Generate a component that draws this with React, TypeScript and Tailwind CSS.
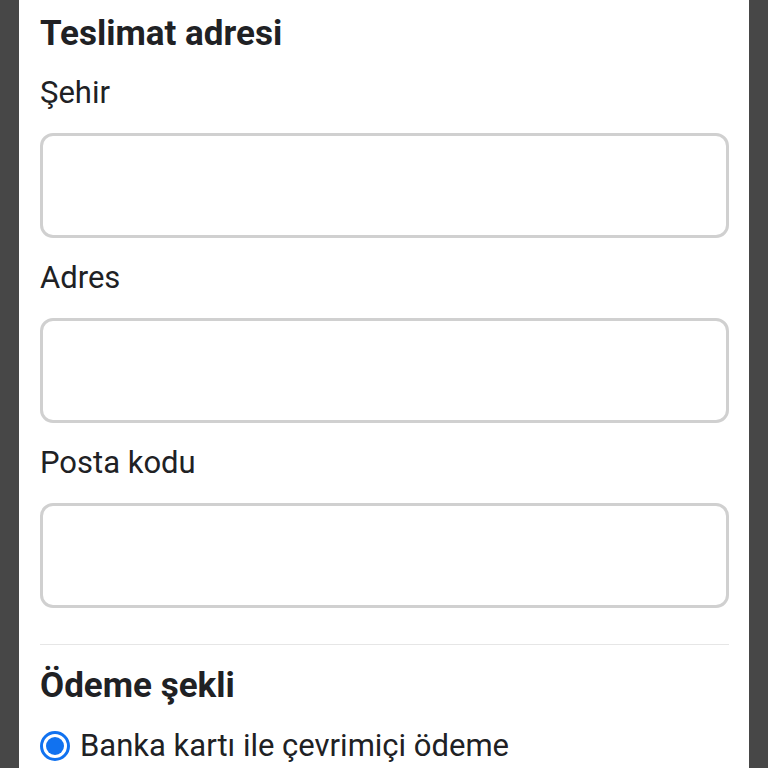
import React from 'react';

const fields = ['Şehir', 'Adres', 'Posta kodu'];

export default function App() {
  return (
    <div className="w-[768px] h-[768px] overflow-hidden bg-[#474747] px-[19px] font-['Roboto',sans-serif] text-[#202124]">
      <div className="h-full bg-white px-[21px] pt-[14px] pr-[20px]">
        <h2 className="text-[35px] leading-[40px] font-bold">Teslimat adresi</h2>

        {fields.map((label, i) => (
          <div key={label} className={i === 0 ? 'mt-[21px]' : 'mt-[22px]'}>
            <label className="block text-[31px] leading-[36px]">{label}</label>
            <div className="mt-[22px] h-[105px] rounded-[13px] border-[3px] border-[#d0d0d0] bg-white" />
          </div>
        ))}

        <div className="mt-[36px] h-px bg-[#e6e6e6]" />

        <h2 className="mt-[21px] text-[35px] leading-[40px] font-bold">Ödeme şekli</h2>

        <div className="mt-[22px] flex items-center gap-[10px]">
          <span className="flex h-[30px] w-[30px] items-center justify-center rounded-full border-[3px] border-[#1172f0]">
            <span className="h-[18px] w-[18px] rounded-full bg-[#1172f0]" />
          </span>
          <span className="text-[31px] leading-[36px]">Banka kartı ile çevrimiçi ödeme</span>
        </div>
      </div>
    </div>
  );
}
